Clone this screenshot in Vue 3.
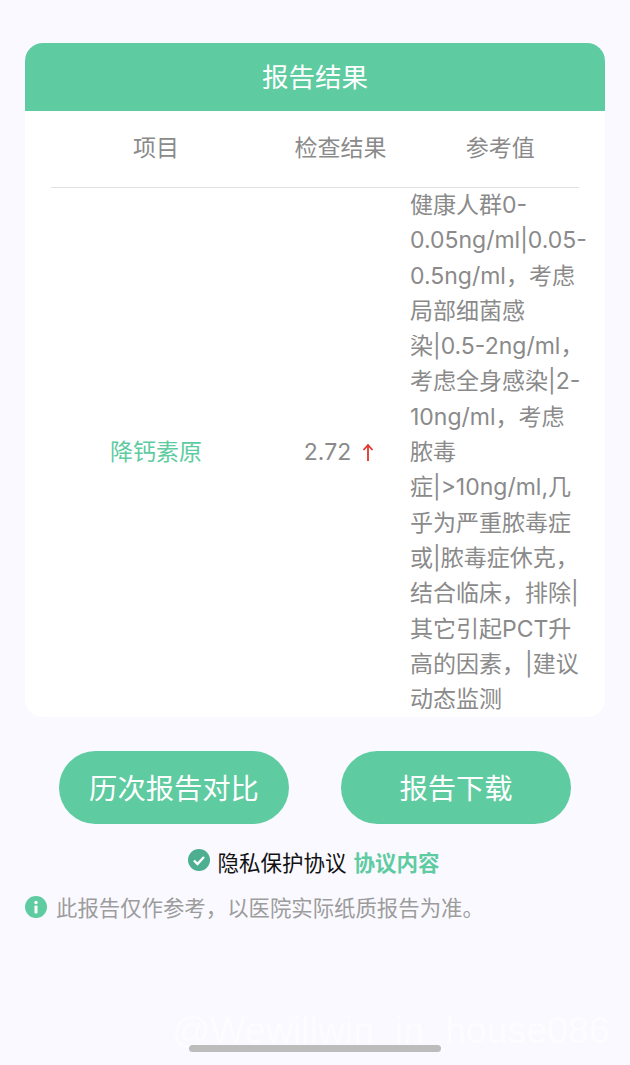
<template>
  <div class="page">
    <section class="card">
      <div class="card-title">报告结果</div>
      <div class="table-head">
        <span>项目</span>
        <span>检查结果</span>
        <span class="head-ref">参考值</span>
      </div>
      <div class="divider"></div>
      <div class="table-row">
        <div class="item-name">{{ row.name }}</div>
        <div class="item-value">
          <span>{{ row.value }}</span>
          <svg class="arrow" width="12" height="19" viewBox="0 0 12 19">
            <path d="M6 18V2M1.500 7 6 2l4.500 5" fill="none" stroke="#e0352b" stroke-width="1.800" />
          </svg>
        </div>
        <div class="item-ref">{{ row.reference }}</div>
      </div>
    </section>

    <div class="actions">
      <button class="action-btn">历次报告对比</button>
      <button class="action-btn">报告下载</button>
    </div>

    <div class="agreement">
      <svg width="22" height="22" viewBox="0 0 22 22">
        <circle cx="11" cy="11" r="11" fill="#4eaf90" />
        <path d="M6 11.500l3.500 3.500 6.500-7" fill="none" stroke="#fff" stroke-width="2.400" />
      </svg>
      <span class="agreement-label">隐私保护协议</span>
      <span class="agreement-link">协议内容</span>
    </div>

    <div class="notice">
      <svg width="22" height="22" viewBox="0 0 22 22">
        <circle cx="11" cy="11" r="11" fill="#5ecba1" />
        <circle cx="11" cy="6.500" r="1.700" fill="#fff" />
        <rect x="9.500" y="9.500" width="3" height="8" rx="0.800" fill="#fff" />
      </svg>
      <span>此报告仅作参考，以医院实际纸质报告为准。</span>
    </div>

    <div class="watermark">@Wewillwin_in_house086</div>
    <div class="home-bar"></div>
  </div>
</template>

<script setup>
const row = {
  name: "降钙素原",
  value: "2.72",
  reference:
    "健康人群0-0.05ng/ml|0.05-0.5ng/ml，考虑局部细菌感染|0.5-2ng/ml，考虑全身感染|2-10ng/ml，考虑脓毒症|>10ng/ml,几乎为严重脓毒症或|脓毒症休克，结合临床，排除|其它引起PCT升高的因素，|建议动态监测",
};
</script>

<style>
html,
body {
  margin: 0;
  background: #faf9ff;
}
</style>

<style scoped>
.page {
  position: relative;
  box-sizing: border-box;
  width: 630px;
  height: 1065px;
  padding: 43px 25px 0;
  overflow: hidden;
  background: #faf9ff;
  font-family: Inter, "Noto Sans CJK SC", sans-serif;
}

.card {
  overflow: hidden;
  border-radius: 18px;
  background: #fff;
}

.card-title {
  height: 68px;
  background: #5ecba1;
  color: #fff;
  font-size: 26.500px;
  line-height: 68px;
  text-align: center;
}

.table-head,
.table-row {
  display: grid;
  grid-template-columns: 230px 139px 177.500px;
  padding-left: 16px;
  color: #8a8a8a;
  font-size: 23px;
}

.table-head {
  height: 76px;
  line-height: 74px;
  text-align: center;
}

.head-ref {
  padding-left: 3px;
}

.divider {
  height: 1px;
  margin: 0 26px;
  background: #e2e2e2;
}

.table-row {
  align-items: center;
  line-height: 35.300px;
}

.item-name {
  color: #5ecba1;
  text-align: center;
}

.item-value {
  display: flex;
  align-items: center;
  justify-content: center;
  gap: 11px;
  padding-right: 3px;
}

.arrow {
  flex: none;
}

.item-ref {
  overflow-wrap: anywhere;
}

.actions {
  display: flex;
  justify-content: center;
  gap: 52px;
  margin-top: 34px;
}

.action-btn {
  width: 230px;
  height: 73px;
  padding: 0 0 3px;
  border: none;
  border-radius: 37px;
  background: #5ecba1;
  color: #fff;
  font-family: inherit;
  font-size: 28.300px;
}

.agreement {
  display: flex;
  align-items: center;
  justify-content: center;
  gap: 7px;
  height: 30px;
  margin-top: 22px;
  padding-right: 2px;
  font-size: 21.500px;
}

.agreement svg {
  margin-top: -2px;
}

.agreement-label {
  color: #111;
}

.agreement-link {
  color: #5ecba1;
  font-weight: 700;
}

.notice {
  display: flex;
  align-items: center;
  gap: 9px;
  height: 30px;
  margin-top: 15px;
  color: #9c9c9c;
  font-size: 21.400px;
}

.notice svg {
  margin-top: 2px;
}

.watermark {
  position: absolute;
  left: 172px;
  top: 1008px;
  color: #fff;
  font-family: "Liberation Sans", sans-serif;
  font-size: 37.500px;
  line-height: 44px;
  opacity: 0.6;
  white-space: nowrap;
}

.home-bar {
  position: absolute;
  left: 189px;
  top: 1045px;
  width: 252px;
  height: 7px;
  border-radius: 4px;
  background: #bcbcbc;
}
</style>
